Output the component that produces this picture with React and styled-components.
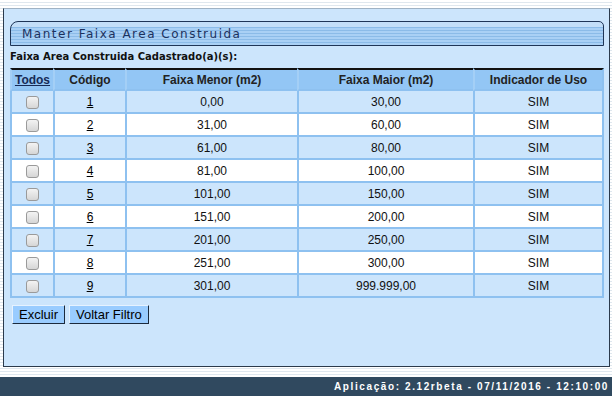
import React from 'react';
import styled, { createGlobalStyle } from 'styled-components';

const GlobalStyle = createGlobalStyle`
  html, body {
    margin: 0;
    padding: 0;
  }
  body {
    font-family: 'Liberation Sans', Arial, sans-serif;
    background: repeating-linear-gradient(to bottom, #ffffff 0 2px, #dfe7ee 2px 3px);
  }
`;

// layout geral da pagina
const Page = styled.div`
  width: 612px;
  height: 396px;
  display: flex;
  flex-direction: column;
  overflow: hidden;
`;

// painel azul principal
const Panel = styled.div`
  flex: 1;
  margin: 8px 2px 10px 3px;
  padding: 12px 5px 0 6px;
  background-color: #cce5fc;
  border: 1px solid #2b3a4c;
  border-top-color: #9fb2c4;
`;

// aba do titulo
const TitleTab = styled.div`
  height: 23px;
  display: flex;
  align-items: center;
  padding-left: 11px;
  border: 1px solid #1f3557;
  border-radius: 8px 5px 0 0;
  background:
    linear-gradient(to bottom, #c3def8 0, #c3def8 5px, transparent 5px),
    repeating-linear-gradient(to bottom, #a9d0f5 0 2px, #8bbbe8 2px 3px);
  color: #1c325e;
  font-family: 'DejaVu Sans', Verdana, sans-serif;
  font-size: 12px;
  letter-spacing: 1.5px;
`;

const SubTitle = styled.p`
  margin: 4px 0 4px 0;
  height: 14px;
  line-height: 14px;
  font-family: 'DejaVu Sans', Verdana, sans-serif;
  font-size: 10px;
  font-weight: bold;
  color: #111;
`;

const Table = styled.table`
  width: 594px;
  border-collapse: separate;
  border-spacing: 0;
  table-layout: fixed;
  font-size: 12px;
`;

const Th = styled.th`
  height: 19px;
  padding: 0;
  background-color: #93c6f5;
  border-top: 2px solid #111;
  border-bottom: 2px solid #8ec1f0;
  border-left: 2px solid #a4cff6;
  font-weight: bold;
  color: #222;
  text-align: center;
  &:last-child {
    border-right: 2px solid #8ec1f0;
  }
`;

const HeadLink = styled.span`
  color: #172a55;
  text-decoration: underline;
`;

const Td = styled.td`
  height: 21px;
  padding: 0;
  background-color: ${p => (p.$odd ? '#cce5fc' : '#ffffff')};
  border-bottom: 2px solid #8ec1f0;
  border-left: 2px solid #8ec1f0;
  color: #111;
  text-align: center;
  &:last-child {
    border-right: 2px solid #8ec1f0;
  }
`;

const CodeLink = styled.span`
  color: #000;
  text-decoration: underline;
`;

const CheckBox = styled.span`
  display: inline-block;
  vertical-align: middle;
  width: 11px;
  height: 11px;
  border: 1px solid #9a9a9a;
  border-radius: 3px;
  background: linear-gradient(to bottom, #f3f3f3, #d6d6d6);
`;

const ButtonRow = styled.div`
  margin-top: 7px;
  display: flex;
  gap: 4px;
  padding-left: 2px;
`;

const Button = styled.button`
  height: 19px;
  padding: 0 6px;
  background-color: #99ccff;
  border: 1px solid;
  border-color: #e6f2ff #1b2a3d #1b2a3d #e6f2ff;
  font-family: 'Liberation Sans', Arial, sans-serif;
  font-size: 13px;
  line-height: 17px;
  color: #000;
`;

const Footer = styled.div`
  height: 19px;
  background-color: #30495f;
  display: flex;
  align-items: center;
  justify-content: flex-end;
  padding-right: 3px;
  color: #fff;
  font-size: 10px;
  font-weight: bold;
  letter-spacing: 1.6px;
`;

const linhas = [
  ['1', '0,00', '30,00'],
  ['2', '31,00', '60,00'],
  ['3', '61,00', '80,00'],
  ['4', '81,00', '100,00'],
  ['5', '101,00', '150,00'],
  ['6', '151,00', '200,00'],
  ['7', '201,00', '250,00'],
  ['8', '251,00', '300,00'],
  ['9', '301,00', '999.999,00'],
];

const App = () => {
  return (
    <Page>
      <GlobalStyle />
      <Panel>
        <TitleTab>Manter Faixa Area Construida</TitleTab>
        <SubTitle>Faixa Area Construida Cadastrado(a)(s):</SubTitle>
        <Table>
          <colgroup>
            <col style={{ width: 43 }} />
            <col style={{ width: 72 }} />
            <col style={{ width: 172 }} />
            <col style={{ width: 176 }} />
            <col />
          </colgroup>
          <thead>
            <tr>
              <Th><HeadLink>Todos</HeadLink></Th>
              <Th>Código</Th>
              <Th>Faixa Menor (m2)</Th>
              <Th>Faixa Maior (m2)</Th>
              <Th>Indicador de Uso</Th>
            </tr>
          </thead>
          <tbody>
            {linhas.map(([cod, menor, maior], i) => (
              <tr key={cod}>
                <Td $odd={i % 2 === 0}><CheckBox /></Td>
                <Td $odd={i % 2 === 0}><CodeLink>{cod}</CodeLink></Td>
                <Td $odd={i % 2 === 0}>{menor}</Td>
                <Td $odd={i % 2 === 0}>{maior}</Td>
                <Td $odd={i % 2 === 0}>SIM</Td>
              </tr>
            ))}
          </tbody>
        </Table>
        <ButtonRow>
          <Button>Excluir</Button>
          <Button>Voltar Filtro</Button>
        </ButtonRow>
      </Panel>
      <Footer>Aplicação: 2.12rbeta - 07/11/2016 - 12:10:00</Footer>
    </Page>
  );
};

export default App;
